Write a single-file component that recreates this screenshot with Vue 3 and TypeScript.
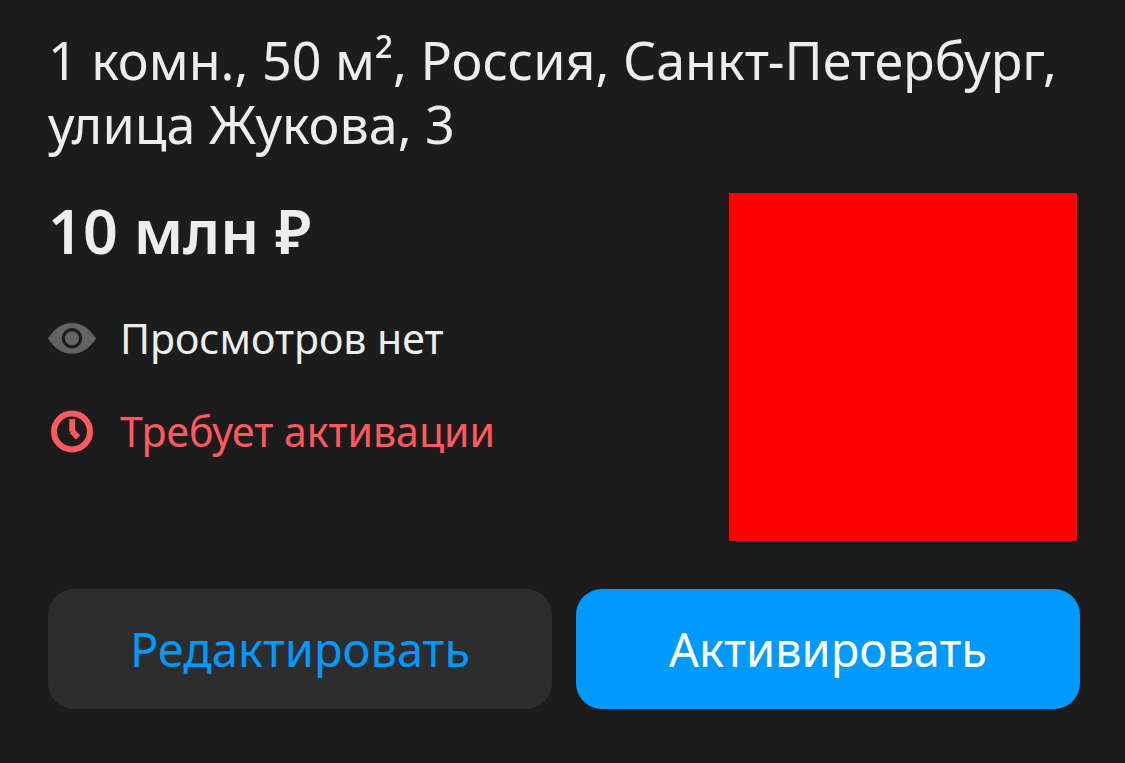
<script setup lang="ts">
interface Offer {
  title: string
  price: string
  views: string
  status: string
}

const offer: Offer = {
  title: '1 комн., 50 м², Россия, Санкт-Петербург, улица Жукова, 3',
  price: '10 млн ₽',
  views: 'Просмотров нет',
  status: 'Требует активации',
}
</script>

<template>
  <article class="card">
    <h1 class="title">{{ offer.title }}</h1>
    <div class="body">
      <div class="info">
        <p class="price">{{ offer.price }}</p>
        <p class="row">
          <svg class="icon" viewBox="0 0 48 48" aria-hidden="true">
            <path fill="#636363" fill-rule="evenodd" d="M0 24.4C7 14 14.5 9 24 9s17 5 24 15.4C41 34.8 33.5 39.7 24 39.7S7 34.8 0 24.4Zm24-10.4a10.3 10.3 0 1 0 0 20.6 10.3 10.3 0 0 0 0-20.6Z" />
            <circle cx="24" cy="24.3" r="7" fill="#636363" />
          </svg>
          <span>{{ offer.views }}</span>
        </p>
        <p class="row alert">
          <svg class="icon" viewBox="0 0 48 48" aria-hidden="true">
            <circle cx="24" cy="24.5" r="18" fill="none" stroke="currentColor" stroke-width="6" />
            <path fill="none" stroke="currentColor" stroke-width="5.8" d="M24.2 12v12.7" />
            <path fill="none" stroke="currentColor" stroke-width="5.8" d="M24 24l6 6.5" />
          </svg>
          <span>{{ offer.status }}</span>
        </p>
      </div>
      <div class="photo" role="img" aria-label="Фото"></div>
    </div>
    <div class="actions">
      <button class="button" type="button">Редактировать</button>
      <button class="button primary" type="button">Активировать</button>
    </div>
  </article>
</template>

<style>
body {
  background: #1c1c1c;
}
</style>

<style scoped>
.card {
  padding: 28px 48px 54px;
  color: #ededed;
  background: #1c1c1c;
  font-family: "Noto Sans", "Open Sans", sans-serif;
}
.title {
  margin: 0 -12px 0 0;
  font-size: 52px;
  font-weight: 400;
  line-height: 64px;
}
.body {
  display: flex;
  justify-content: space-between;
  margin-top: 37px;
}
.info p {
  margin: 0;
}
.info .price {
  font-size: 61px;
  font-weight: 600;
  line-height: 76px;
}
.row {
  display: flex;
  align-items: center;
  gap: 24px;
  font-size: 41px;
  line-height: 48px;
}
.info .row {
  margin-top: 45px;
}
.alert {
  color: #ff5960;
}
.icon {
  width: 48px;
  height: 48px;
  flex: none;
}
.photo {
  width: 348px;
  height: 348px;
  flex: none;
  background: #ff0000;
}
.actions {
  display: grid;
  grid-template-columns: 1fr 1fr;
  gap: 24px;
  margin: 48px -3px 0 0;
}
.button {
  height: 120px;
  padding: 0;
  border: 0;
  border-radius: 26px;
  color: #0099ff;
  background: #2d2d2d;
  font-family: inherit;
  font-size: 47px;
  line-height: 60px;
}
.primary {
  color: #ffffff;
  background: #0099ff;
}
</style>
